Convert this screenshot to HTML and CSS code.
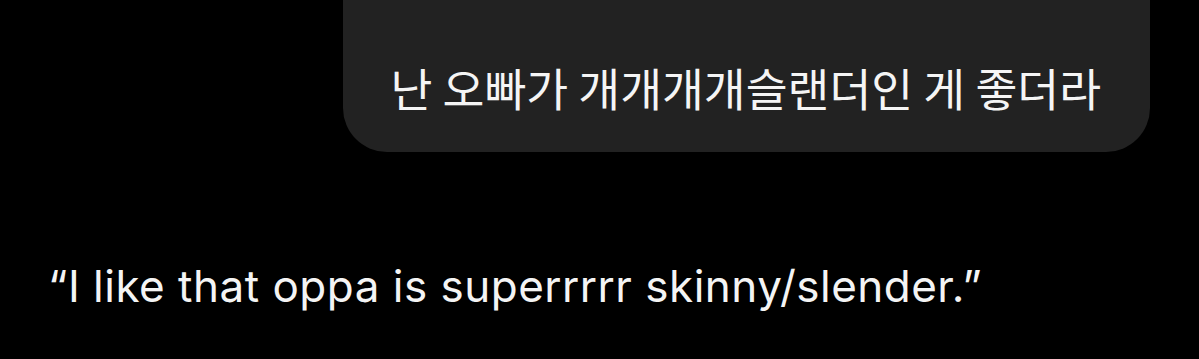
FILE: index.html
```html
<!DOCTYPE html>
<html>
<head>
<title>Translation</title>
<link rel="stylesheet" href="styles.css">
</head>
<body>

<div class="screen">
  <div class="bubble-row">
    <div class="bubble">난 오빠가 개개개개슬랜더인 게 좋더라</div>
  </div>
  <p class="translation">“I like that oppa is superrrrr skinny/slender.”</p>
</div>

</body>
</html>
```

FILE: styles.css
```css
body {
  margin: 0;
  background-color: #000;
  color: #f4f4f4;
  font-family: Inter, "Noto Sans", sans-serif;
}

.screen {
  width: 1199px;
  height: 359px;
  overflow: hidden;
}

.bubble-row {
  display: flex;
  justify-content: flex-end;
  padding-right: 49px;
}

.bubble {
  background-color: #222;
  border-radius: 0 0 44px 44px;
  padding: 58px 49px 36px 47px;
  font-family: "Noto Sans CJK KR", sans-serif;
  font-size: 45.5px;
  line-height: 58px;
  color: #f5f5f5;
}

.translation {
  margin: 109px 0 0 48px;
  font-size: 44px;
  line-height: 50px;
  letter-spacing: 0.5px;
}
```
